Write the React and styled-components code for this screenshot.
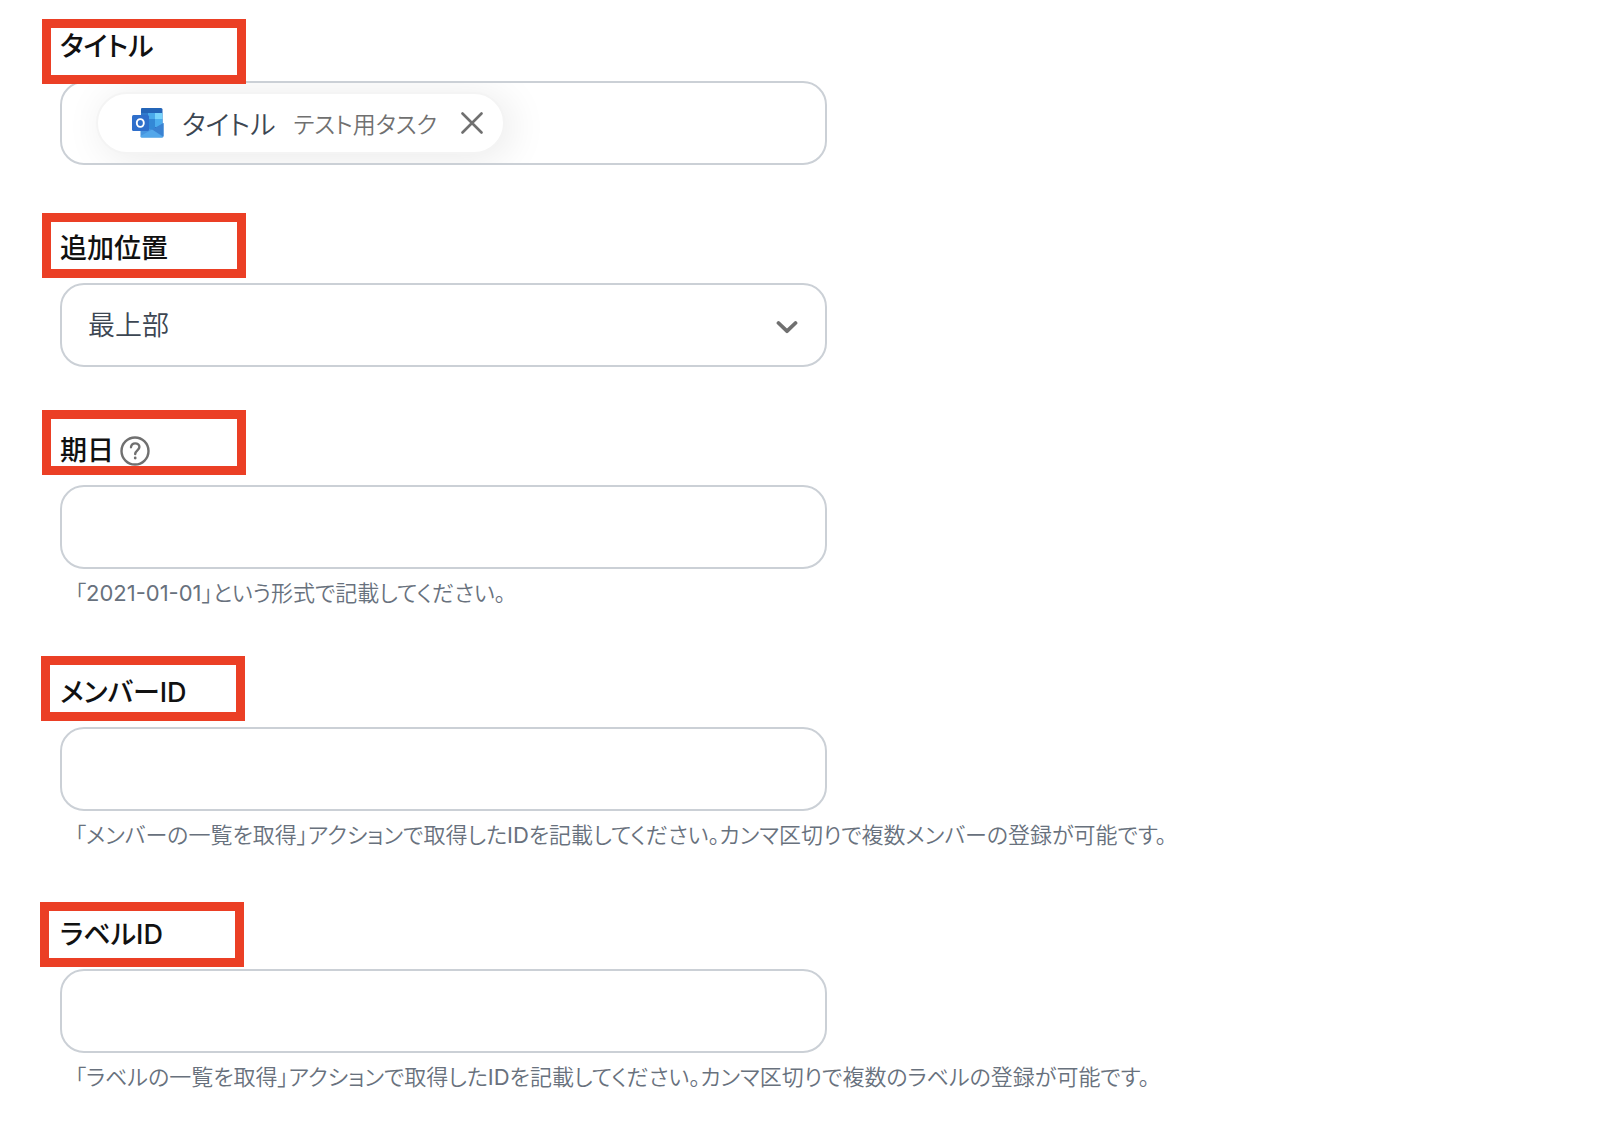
import { useState } from 'react';
import styled, { createGlobalStyle } from 'styled-components';

const GlobalStyle = createGlobalStyle`
  * {
    box-sizing: border-box;
  }

  body {
    margin: 0;
    background: #fff;
    font-family: Inter, 'Noto Sans CJK JP DemiLight', 'Noto Sans CJK JP', sans-serif;
    font-feature-settings: 'palt';
  }

  input, select, button {
    font: inherit;
    font-feature-settings: inherit;
  }
`;

const Form = styled.form`
  display: flex;
  flex-direction: column;
  gap: 62px;
  padding: 25px 60px;
`;

const Field = styled.div`
  display: flex;
  flex-direction: column;
`;

const LabelRow = styled.div`
  position: relative;
  display: flex;
  align-items: center;
  gap: 6px;
  height: 44px;
  margin-bottom: 12px;
`;

const Label = styled.label`
  font-family: Inter, 'Noto Sans CJK JP', sans-serif;
  font-size: 27px;
  font-weight: 500;
  line-height: 44px;
  color: #111;
`;

/* Marker frame laid over a label */
const Marker = styled.span`
  position: absolute;
  top: ${({ $top }) => $top}px;
  left: ${({ $left }) => $left}px;
  width: 204px;
  height: 65px;
  border: 9px solid #eb3f25;
  pointer-events: none;
`;

const control = `
  width: 100%;
  max-width: 767px;
  height: 84px;
  border: 2px solid #cbd0d6;
  border-radius: 24px;
  background: #fff;
  color: #3c4652;
  font-size: 27px;
`;

const TextInput = styled.input`
  ${control}
  padding: 0 26px;
  outline-color: #9aa3ad;
`;

const TokenBox = styled.div`
  ${control}
  display: flex;
  align-items: center;
  padding: 0 26px 0 34px;
  overflow: hidden;
`;

const TokenInput = styled.input`
  flex: 1;
  min-width: 0;
  border: 0;
  outline: 0;
  background: transparent;
`;

const Chip = styled.span`
  display: flex;
  align-items: center;
  flex-shrink: 0;
  height: 62px;
  padding: 0 20px 0 34px;
  border: 2px solid #f4f4f4;
  border-radius: 31px;
  background: #fff;
  box-shadow: 6px 4px 40px rgba(0, 0, 0, 0.09);
`;

const ChipName = styled.span`
  margin: 0 18px;
  font-size: 27px;
`;

const ChipValue = styled.span`
  font-size: 23px;
  color: #707070;
`;

const RemoveButton = styled.button`
  display: flex;
  margin-left: 24px;
  padding: 0;
  border: 0;
  background: none;
  color: #707070;
  cursor: pointer;
`;

const SelectWrap = styled.div`
  position: relative;
  max-width: 767px;

  svg {
    position: absolute;
    top: 32px;
    right: 29px;
    pointer-events: none;
  }
`;

const Select = styled.select`
  ${control}
  display: block;
  padding: 0 26px;
  appearance: none;
`;

const HelpButton = styled.button`
  display: flex;
  padding: 0;
  border: 0;
  background: none;
  color: #707070;
  cursor: help;
`;

const Hint = styled.p`
  margin: 8px 0 0;
  padding-left: 15px;
  font-size: 22px;
  line-height: 32px;
  color: #68717d;
`;

function OutlookIcon() {
  return (
    <svg width="32" height="30" viewBox="0 0 32 30" aria-hidden="true">
      <path d="M10 0h19a1.500 1.500 0 0 1 1.500 1.500V22H9V1a1 1 0 0 1 1-1z" fill="#2465b8" />
      <path d="M9 5h7v6H9z" fill="#2f7acb" />
      <path d="M16 5h7v6h-7z" fill="#49a9ea" />
      <path d="M23 5h7.500v6H23z" fill="#78d3fb" />
      <path d="M9 11h7v9H9z" fill="#2560ac" />
      <path d="M16 11h7v11h-7z" fill="#3388d6" />
      <path d="M23 11h7.500v8H23z" fill="#4bacee" />
      <path d="M31.500 15v13a1.500 1.500 0 0 1-1.500 1.500H10A1.500 1.500 0 0 1 8.500 28V17l11.500 5z" fill="#4795df" />
      <path d="M31.500 15v13.500L20 21.500z" fill="#3a82d2" />
      <path d="M20 21.500L31 29l-1 .5H10a1.500 1.500 0 0 1-1.500-1.500z" fill="#53a7ea" />
      <rect y="7" width="17" height="16" rx="1.500" fill="#2f6fcb" />
      <ellipse cx="8.300" cy="15" rx="3.500" ry="3.900" fill="none" stroke="#fff" strokeWidth="1.900" />
    </svg>
  );
}

function CloseIcon() {
  return (
    <svg width="22" height="22" viewBox="0 0 22 22" fill="none" stroke="currentColor" strokeWidth="2.600" strokeLinecap="round" aria-hidden="true">
      <path d="M1.500 1.500l19 19M20.500 1.500l-19 19" />
    </svg>
  );
}

function ChevronIcon() {
  return (
    <svg width="22" height="22" viewBox="0 0 22 22" fill="none" stroke="#707070" strokeWidth="3.800" strokeLinecap="round" strokeLinejoin="round" aria-hidden="true">
      <path d="M2.500 8L11 16.200l8.500-8.200" />
    </svg>
  );
}

function HelpIcon() {
  return (
    <svg width="30" height="30" viewBox="0 0 30 30" fill="none" stroke="currentColor" strokeWidth="2.400" strokeLinecap="round" aria-hidden="true">
      <circle cx="15" cy="15" r="13.500" />
      <path d="M11 11.200c.3-2.400 2-3.800 4.200-3.800 2.400 0 4.200 1.500 4.200 3.700 0 3.200-4.200 3.500-4.200 7" />
      <circle cx="15.200" cy="22" r="1.400" fill="currentColor" stroke="none" />
    </svg>
  );
}

function FormField({ id, label, marker, help, hint, children }) {
  return (
    <Field>
      <LabelRow>
        <Label htmlFor={id}>{label}</Label>
        {help && (
          <HelpButton type="button" aria-label="ヘルプ">
            <HelpIcon />
          </HelpButton>
        )}
        <Marker $left={marker[0]} $top={marker[1]} />
      </LabelRow>
      {children || <TextInput id={id} type="text" aria-describedby={hint && `${id}-hint`} />}
      {hint && <Hint id={`${id}-hint`}>{hint}</Hint>}
    </Field>
  );
}

function App() {
  const [hasToken, setHasToken] = useState(true);

  return (
    <>
      <GlobalStyle />
      <Form>
        <FormField id="title" label="タイトル" marker={[-18, -6]}>
          <TokenBox>
            {hasToken && (
              <Chip>
                <OutlookIcon />
                <ChipName>タイトル</ChipName>
                <ChipValue>テスト用タスク</ChipValue>
                <RemoveButton type="button" aria-label="削除" onClick={() => setHasToken(false)}>
                  <CloseIcon />
                </RemoveButton>
              </Chip>
            )}
            <TokenInput id="title" type="text" />
          </TokenBox>
        </FormField>
        <FormField id="position" label="追加位置" marker={[-18, -14]}>
          <SelectWrap>
            <Select id="position">
              <option>最上部</option>
            </Select>
            <ChevronIcon />
          </SelectWrap>
        </FormField>
        <FormField
          id="due"
          label="期日"
          marker={[-18, -19]}
          help
          hint="「2021-01-01」という形式で記載してください。"
        />
        <FormField
          id="member"
          label="メンバーID"
          marker={[-19, -15]}
          hint="「メンバーの一覧を取得」アクションで取得したIDを記載してください。カンマ区切りで複数メンバーの登録が可能です。"
        />
        <FormField
          id="label"
          label="ラベルID"
          marker={[-20, -11]}
          hint="「ラベルの一覧を取得」アクションで取得したIDを記載してください。カンマ区切りで複数のラベルの登録が可能です。"
        />
      </Form>
    </>
  );
}

export default App;
